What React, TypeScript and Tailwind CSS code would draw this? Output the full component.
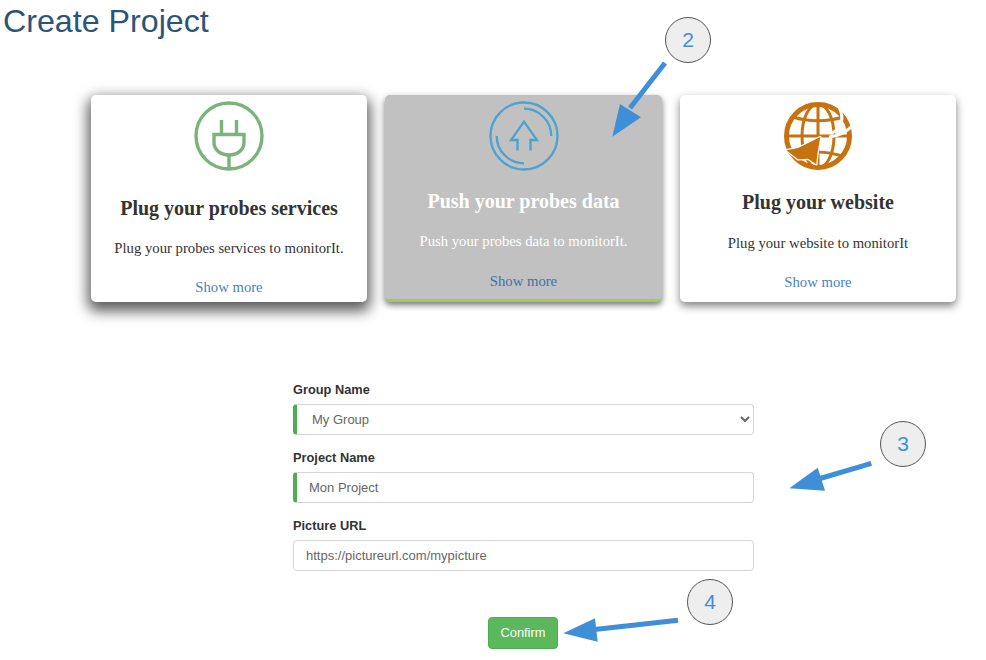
import React from "react";

const PlugIcon = () => (
  <svg width="72" height="72" viewBox="0 0 72 72" fill="none" stroke="#7ab47a" strokeWidth="3.4">
    <circle cx="36" cy="36" r="33" />
    <path d="M28.5 20v15M43.5 20v15" />
    <path d="M21 34.5h30v8c0 7.500-7 12.500-15 12.500s-15-5-15-12.500z" />
    <path d="M36 54v14" />
  </svg>
);

const PushIcon = () => (
  <svg width="72" height="72" viewBox="0 0 72 72" fill="none" stroke="#4aa3d0" strokeWidth="2.3">
    <circle cx="36" cy="36" r="33.5" />
    <path d="M36 8.700A27.300 27.300 0 0 1 63.300 36" />
    <path d="M8.700 36A27.300 27.300 0 0 0 36 63.300" />
    <path d="M29.500 50.500V40H23L36 21.700 49 40h-6.500v10.500" />
  </svg>
);

const GlobeIcon = () => (
  <svg width="72" height="72" viewBox="0 0 72 72" fill="none">
    <g stroke="#c8720f">
      <circle cx="36" cy="36" r="31.500" strokeWidth="5" />
      <ellipse cx="36" cy="36" rx="16" ry="32" strokeWidth="3" />
      <path d="M36 4v64M4 36h64" strokeWidth="3" />
      <path d="M11 17c15 5 35 5 50 0M12 56c15-5 33-5 48 0" strokeWidth="3" />
    </g>
    <path d="M72 24C66 31 58 36 47 37" stroke="#fff" strokeWidth="3" />
    <path d="M57 7C63 19 59 28 49 34" stroke="#fff" strokeWidth="3" />
    <path
      d="M38.300 37 16 48 4.300 50.300 16 59.300 26 58.700 34.300 64.300 35.300 54.300z"
      fill="#c8720f"
      stroke="#fff"
      strokeWidth="2.500"
      paintOrder="stroke"
      strokeLinejoin="round"
    />
  </svg>
);

const Card = ({
  icon,
  title,
  text,
  className,
  titleClass,
  textClass,
  linkClass,
}: {
  icon: React.ReactNode;
  title: string;
  text: string;
  className: string;
  titleClass: string;
  textClass: string;
  linkClass: string;
}) => (
  <div className={`flex h-[207px] flex-col items-center rounded-[5px] pt-[5px] ${className}`}>
    {icon}
    <h3 className={`text-[20px] font-bold leading-6 ${titleClass}`}>{title}</h3>
    <p className={`text-[14.7px] leading-5 ${textClass}`}>{text}</p>
    <a className={`text-[14.7px] leading-5 ${linkClass}`}>Show more</a>
  </div>
);

const Badge = ({ n, className }: { n: string; className: string }) => (
  <div
    className={`absolute flex h-[46px] w-[46px] items-center justify-center rounded-full border border-[#555] bg-[#eeeeee] text-[21px] text-[#3f8fdc] ${className}`}
  >
    {n}
  </div>
);

const Field = ({ label, children }: { label: string; children: React.ReactNode }) => (
  <div className="h-[68px]">
    <label className="block h-[23px] text-[12.8px] font-bold leading-[18px] text-[#333]">{label}</label>
    {children}
  </div>
);

export default function App() {
  return (
    <div className="relative h-[660px] w-[986px] overflow-hidden bg-white font-['Liberation_Sans',sans-serif]">
      <h1 className="pl-[3px] text-[32.2px] leading-[42px] text-[#2a5578]">Create Project</h1>

      <div className="mt-[53px] ml-[91px] flex gap-[18px] font-['Liberation_Serif',serif]">
        <Card
          className="w-[276px] bg-white shadow-[0_6px_14px_3px_rgba(0,0,0,0.65)]"
          icon={<PlugIcon />}
          title="Plug your probes services"
          text="Plug your probes services to monitorIt."
          titleClass="mt-[24px] text-[#333]"
          textClass="mt-[18px] text-[#333]"
          linkClass="mt-[19px] text-[#4a82bd]"
        />
        <Card
          className="w-[277px] border-b-[3px] border-b-[#a4c95a] bg-[#c1c1c1] shadow-[0_3px_6px_rgba(0,0,0,0.55)]"
          icon={<PushIcon />}
          title="Push your probes data"
          text="Push your probes data to monitorIt."
          titleClass="mt-[17px] text-white"
          textClass="mt-[18px] text-white"
          linkClass="mt-[20px] text-[#3f70a8]"
        />
        <Card
          className="w-[276px] bg-white shadow-[0_4px_8px_rgba(0,0,0,0.5)]"
          icon={<GlobeIcon />}
          title="Plug your website"
          text="Plug your website to monitorIt"
          titleClass="mt-[18px] text-[#333]"
          textClass="mt-[19px] text-[#333]"
          linkClass="mt-[19px] text-[#4a82bd]"
        />
      </div>

      <form className="mt-[79px] ml-[293px] w-[461px] text-[13px]">
        <Field label="Group Name">
          <select
            defaultValue="My Group"
            className="h-[31px] w-full rounded-[4px] border border-l-[4px] border-[#d5d5d5] border-l-[#4cae4f] bg-white pl-[11px] text-[#666]"
          >
            <option>My Group</option>
          </select>
        </Field>
        <Field label="Project Name">
          <input
            readOnly
            value="Mon Project"
            className="h-[31px] w-full rounded-[4px] border border-l-[4px] border-[#d5d5d5] border-l-[#4cae4f] bg-white pl-[12px] text-[#666]"
          />
        </Field>
        <Field label="Picture URL">
          <input
            readOnly
            value="https://pictureurl.com/mypicture"
            className="h-[31px] w-full rounded-[4px] border border-[#d5d5d5] bg-white pl-[12px] text-[#666]"
          />
        </Field>
        <div className="mt-[32px] flex justify-center pr-[1px]">
          <button
            type="button"
            className="h-[32px] w-[70px] rounded-[4px] border border-[#4cae4c] bg-[#5cb85c] text-[12.8px] text-white"
          >
            Confirm
          </button>
        </div>
      </form>

      <svg className="pointer-events-none absolute inset-0" width="986" height="660" fill="#3f8fd8" stroke="none">
        <path d="M665 63 630 108" stroke="#3f8fd8" strokeWidth="5" fill="none" />
        <path d="M612.3 136.7 620 104 641 117.3z" />
        <path d="M871.3 463.3 815 480" stroke="#3f8fd8" strokeWidth="5" fill="none" />
        <path d="M789.3 488.3 817.7 467.7 825 490.7z" />
        <path d="M678 620.3 590 630" stroke="#3f8fd8" strokeWidth="5" fill="none" />
        <path d="M563.3 633.3 595 618.3 597.7 641.7z" />
      </svg>

      <Badge n="2" className="top-[17px] left-[665px]" />
      <Badge n="3" className="top-[421px] left-[880px]" />
      <Badge n="4" className="top-[579px] left-[687px]" />
    </div>
  );
}
